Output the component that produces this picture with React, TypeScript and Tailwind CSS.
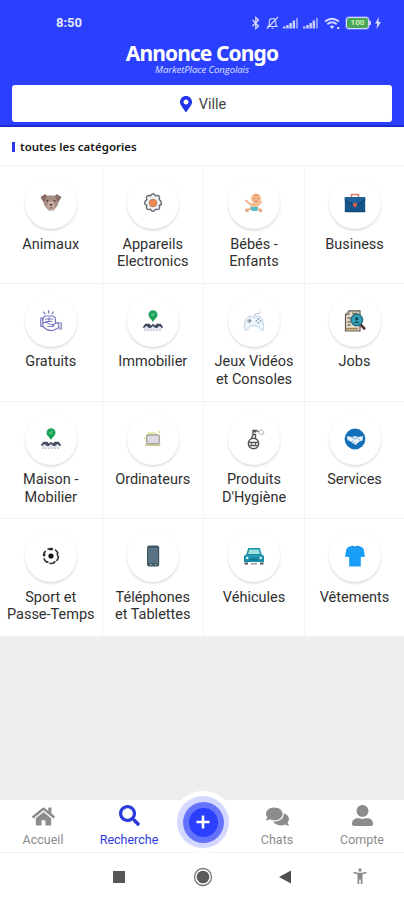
import React from 'react';
import { FaMapMarkerAlt, FaHome, FaSearch, FaComments, FaUserAlt } from 'react-icons/fa';

// ICONES DES CATEGORIES
const DogIcon = () => (
  <svg width="22" height="22" viewBox="0 0 22 22">
    <path d="M4 3.500h14l1.500 4-2 6-4 5h-5l-4-5-2-6z" fill="#a58d84" />
    <path d="M.5 5l5-3L7 4.500 4.500 9.500 2.500 8.500zM21.500 5l-5-3L15 4.500l2.500 5 2-1z" fill="#8a6d66" />
    <path d="M8.500 9h5l1.500 5-2 4H9l-2-4z" fill="#c9ada0" />
    <circle cx="7.500" cy="8.800" r="1.100" fill="#5c4743" />
    <circle cx="14.500" cy="8.800" r="1.100" fill="#5c4743" />
    <path d="M9.300 12h3.400L11 14.500z" fill="#4b3936" />
    <path d="M9.500 16h3" stroke="#6b504a" strokeWidth="1" />
  </svg>
);

const GearIcon = () => (
  <svg width="22" height="22" viewBox="0 0 22 22">
    <path
      d="M8.500 3.900Q9.500 1.700 11 1.700t2.500 2.200q2.300-.9 3.500.2 1.100 1.200.2 3.500 2.200.9 2.200 3.400t-2.200 2.500q.9 2.300-.2 3.500-1.200 1.100-3.500.2-1 2.200-2.500 2.200t-2.500-2.200q-2.300.9-3.500-.2-1.100-1.200-.2-3.500-2.200-1-2.200-2.500t2.200-3.400q-.9-2.300.2-3.500 1.200-1.100 3.500-.2z"
      fill="#eef1f5" stroke="#666b72" strokeWidth="1.400" strokeLinejoin="round"
    />
    <circle cx="11" cy="11" r="3.800" fill="#f08a54" stroke="#b5714f" strokeWidth=".8" />
  </svg>
);

const BabyIcon = () => (
  <svg width="22" height="22" viewBox="0 0 22 22">
    <path d="M3 8.500l5 4.500M18 10l-4 4M8 17l-5 .8M13 17l5 .8" stroke="#f1b48b" strokeWidth="2" strokeLinecap="round" />
    <path d="M8 11h7v6H8z" fill="#f5bd96" />
    <circle cx="13" cy="6.500" r="5" fill="#f5b88d" />
    <path d="M11.500 3.500q2-1.500 4 .5" stroke="#d98f65" fill="none" />
    <circle cx="11.500" cy="6.500" r=".6" fill="#9c5f43" />
    <circle cx="15" cy="6.500" r=".6" fill="#9c5f43" />
    <path d="M11.500 9q1.500 1 3 0" stroke="#c96d4e" fill="none" strokeWidth=".8" />
    <path d="M7 15h8l-1 4H9z" fill="#4bbcc8" />
    <path d="M2.500 19h3M16 19h3" stroke="#d38f70" strokeWidth="1.300" />
  </svg>
);

const BriefcaseIcon = () => (
  <svg width="22" height="22" viewBox="0 0 22 22">
    <path d="M7.500 6V2.500h7V6" fill="none" stroke="#d9806c" strokeWidth="1.500" strokeLinejoin="round" />
    <rect x=".8" y="5" width="20.400" height="15.300" rx="1" fill="#15558c" />
    <path d="M.8 5h20.400v3L11 13.500.8 8z" fill="#1f619b" />
    <path d="M.8 8 11 13.500 21.200 8M.8 19.300h20.400" fill="none" stroke="#113e69" strokeWidth="1" />
    <path d="M9 11h4v2.500L11 15.500l-2-2z" fill="#d8604d" />
  </svg>
);

const GiftHandIcon = () => (
  <svg width="22" height="22" viewBox="0 0 22 22" fill="none" stroke="#7978c0" strokeWidth="1.200" strokeLinejoin="round" strokeLinecap="round">
    <path d="M8.500.600v2.500M3.500 2l1.500 2M13.500 2 12 4" />
    <path d="M3 9.500q0-3.500 3.500-3.500h5q4 0 4 3.500V13" />
    <path d="M5.500 9h2.500M10 9h3M6 11.500h6M9 7.500v4M.8 8h2v8.500h-2z" />
    <path d="M3 13q4-1.500 6 1l4 .5q2 1.500-1 2H8M12 15l6-2.500 1 5-6 3q-6 .5-10-4" />
    <path d="M18 13h3.200v6h-2.200" />
  </svg>
);

const HousesIcon = () => (
  <svg width="22" height="22" viewBox="0 0 22 22">
    <path d="M11 .3A4.500 4.500 0 0 0 6.500 4.800C6.500 7.800 9.500 9 11 12c1.500-3 4.500-4.200 4.500-7.200A4.500 4.500 0 0 0 11 .3z" fill="#1ba35a" />
    <path d="m9.200 6.300 3.500-3.500M9.500 4.300l2.800 1.500" stroke="#7ad39c" strokeWidth=".9" />
    <path d="M2 17.500l3-2.500 3 2.500V20H2zM8 17.500l3-2.500 3 2.500V20H8zM14 17.500l3-2.500 3 2.500V20h-6z" fill="#e3e6ed" />
    <path d="m.7 17.300 2.600-3.500h4L9 15.500l2-1.800 2 1.800 1.700-1.700h4l2.600 3.500-1.300.6-2.500-2-2.500 2.200-1.700-.1-2.300-2-2.300 2-1.700.1-2.500-2.200-2.500 2z" fill="#454d62" />
    <path d="M2 20.300h18" stroke="#b8bfcd" strokeWidth="1" strokeDasharray="2 1" />
  </svg>
);

const GamepadIcon = () => (
  <svg width="22" height="22" viewBox="0 0 22 22">
    <path d="M12 6V4.500q0-1 2-1h1.500q1.500 0 1.500-2" fill="none" stroke="#b0b8c2" strokeWidth="1.100" strokeDasharray="2.500 .8" />
    <path d="M5 6.500q2-1 4 .5h4q2-1.500 4.500-.5 2 1 3 7.500.8 6-1.200 6.500-1.500.3-4.300-4.500H7q-2.800 4.800-4.300 4.500-2-.5-1.200-6.500 1-6.500 3.500-7.500z" fill="#edf5fc" stroke="#bfd3e5" strokeWidth="1" />
    <path d="M6.500 8.700v4.400M4.300 10.900h4.400" stroke="#8494a5" strokeWidth="1.400" />
    <circle cx="15.500" cy="8.900" r=".9" fill="#839bbd" />
    <circle cx="15.500" cy="12.900" r=".9" fill="#97a5b5" />
    <circle cx="13.500" cy="10.900" r=".9" fill="#90a5bb" />
    <circle cx="17.500" cy="10.900" r=".9" fill="#90a5bb" />
  </svg>
);

const JobsIcon = () => (
  <svg width="22" height="22" viewBox="0 0 22 22">
    <path d="M5 .8h11v20.200H1.500V4.500z" fill="#e3dccd" stroke="#615a53" strokeWidth="1.200" />
    <path d="M1.500 4.500H5V.8" fill="#c9bca9" stroke="#59534d" strokeWidth=".8" />
    <path d="M3.500 8h3M3.500 12h3M3.500 15h3M8 3.500h6" stroke="#7d6f58" strokeWidth="1.600" />
    <path d="M2 18.700h12" stroke="#a58754" strokeWidth="1.800" />
    <path d="m16.500 14.500 3.800 4" stroke="#56372e" strokeWidth="2.600" strokeLinecap="round" />
    <circle cx="12.800" cy="10" r="5.700" fill="#35a2b9" stroke="#2a6f86" strokeWidth="1.600" />
    <circle cx="12.800" cy="8.700" r="1.700" fill="#164b5e" />
    <path d="M9.800 13q3-3.500 6 0" fill="#164b5e" />
  </svg>
);

const ComputerIcon = () => (
  <svg width="22" height="22" viewBox="0 0 22 22">
    <circle cx="10.500" cy="11" r="7" fill="#e2e8a6" />
    <rect x="4.700" y="7" width="12.600" height="8.800" rx="1.500" fill="#dcdae3" stroke="#aaa59c" strokeWidth="1.400" />
    <path d="M3.500 17h14.500" stroke="#bdbd84" strokeWidth="1.300" strokeLinecap="round" />
    <path d="M17.500 3v2M16.500 4h2M2.500 9v2M6 4.500h1" stroke="#d6df78" strokeWidth="1" />
  </svg>
);

const PerfumeIcon = () => (
  <svg width="22" height="22" viewBox="0 0 22 22" fill="none" stroke="#555" strokeWidth="1.400">
    <circle cx="10.500" cy="15.500" r="5.200" />
    <path d="M8.500 10.500 10 6.500h2.500v4M10 6V2.500h3.500L15.500 4M6 14.500h9M6.500 17.500h8M10 3l3 1" />
    <path d="M8.500 14.500v3M12.500 14.500v3" strokeWidth=".8" />
    <path d="m15.500 4.300 1-2 1.700-.5 1.500.7 1.300 1.500-.7 2-2 .8-1.800-.7z" stroke="#888" strokeWidth=".9" strokeDasharray="1.800 .8" />
  </svg>
);

const HandshakeIcon = () => (
  <svg width="22" height="22" viewBox="0 0 22 22">
    <circle cx="11" cy="11" r="10.400" fill="#136fb8" />
    <path d="m3 8 4.500 1L11 8l3.500 1L19 8l-.5 4.500-3 1-4 3.500-4.800-3.500L3.500 12z" fill="#e9f2fa" />
    <path d="m7.500 9 3.500 2 2-1.500 3 3M8 14l1.500-1.500M10 15.500l1.500-1.500" fill="none" stroke="#6ca4d2" strokeWidth=".9" />
  </svg>
);

const BallIcon = () => (
  <svg width="22" height="22" viewBox="0 0 22 22">
    <circle cx="11" cy="11" r="7.500" fill="none" stroke="#333" strokeWidth="1.600" strokeDasharray="5.500 2.350" />
    <circle cx="11" cy="11" r="2.600" fill="#111" />
    <path d="M9 4.600h4M4.800 8.500l-.5 3M17.200 8.500l.5 3M6.500 16.300l2 1M15.500 16.300l-2 1" fill="none" stroke="#222" strokeWidth="1.500" />
  </svg>
);

const PhoneIcon = () => (
  <svg width="22" height="22" viewBox="0 0 22 22">
    <rect x="5" y=".5" width="12.200" height="21" rx="2" fill="#455a68" />
    <path d="M6.300 3h9.600v15H6.300z" fill="#5a7384" />
    <path d="M8 19.500h1.500M13 19.500h1.500" stroke="#a9b9c3" strokeWidth="1.200" />
  </svg>
);

const CarIcon = () => (
  <svg width="22" height="22" viewBox="0 0 22 22">
    <path d="M1.500 17.500h3.500v2H1.500zM17 17.500h3.500v2H17z" fill="#4c565b" />
    <path d="m1 11 2.500-2L5.200 3h11.600l1.700 6 2.500 2v6H1z" fill="#188ba6" />
    <path d="M6.300 4.500h9.400L17 9H5z" fill="#9be0dc" />
    <path d="M1 11h20" stroke="#36a9bf" strokeWidth="1" />
    <circle cx="4.200" cy="13" r="1.300" fill="#d8f4f5" />
    <circle cx="17.800" cy="13" r="1.300" fill="#d8f4f5" />
    <path d="M7 14.800h8" stroke="#137087" strokeWidth="1.200" />
    <path d="M8 18.800h6" stroke="#7b8589" strokeWidth="1.200" />
  </svg>
);

const ShirtIcon = () => (
  <svg width="22" height="22" viewBox="0 0 22 22">
    <path d="M7 1h2q2 1.500 4 0h2q3.800.8 4.600 3l1.400 7.500-4.200.8v9.200H5.200v-9.200L1 11.500 2.400 4Q3.200 1.800 7 1z" fill="#1a9ef5" />
    <path d="M7.800 1q3.200 3 6.400 0" stroke="#0f78c4" strokeWidth="1" fill="none" />
  </svg>
);

const categories = [
  { label: ['Animaux'], icon: DogIcon },
  { label: ['Appareils', 'Electronics'], icon: GearIcon },
  { label: ['Bébés -', 'Enfants'], icon: BabyIcon },
  { label: ['Business'], icon: BriefcaseIcon },
  { label: ['Gratuits'], icon: GiftHandIcon },
  { label: ['Immobilier'], icon: HousesIcon },
  { label: ['Jeux Vidéos', 'et Consoles'], icon: GamepadIcon },
  { label: ['Jobs'], icon: JobsIcon },
  { label: ['Maison -', 'Mobilier'], icon: HousesIcon },
  { label: ['Ordinateurs'], icon: ComputerIcon },
  { label: ['Produits', "D'Hygiène"], icon: PerfumeIcon },
  { label: ['Services'], icon: HandshakeIcon },
  { label: ['Sport et', 'Passe-Temps'], icon: BallIcon },
  { label: ['Téléphones', 'et Tablettes'], icon: PhoneIcon },
  { label: ['Véhicules'], icon: CarIcon },
  { label: ['Vêtements'], icon: ShirtIcon },
];

const SignalIcon = () => (
  <svg width="16" height="12" viewBox="0 0 16 12" fill="#c9d0ff">
    <path d="M0 9.500h2.500v2H0zM3.200 8h2.500v3.500H3.200zM6.400 6h2.500v5.500H6.400zM9.600 3.500h2.500v8H9.600z" />
    <path d="M13 1h2v10.500h-2z" opacity=".6" />
  </svg>
);

const StatusBar = () => (
  <div className="flex h-[46px] items-center justify-between pr-[23px] pl-[56px]">
    <span className="text-[13px] font-bold text-[#e3e7ff]">8:50</span>
    <div className="flex items-center text-[#d5daff]">
      <svg width="10" height="14" viewBox="0 0 10 14" fill="none" stroke="currentColor" strokeWidth="1.300">
        <path d="m1.500 4 6 6L4.800 12.500v-11L7.500 4l-6 6" />
      </svg>
      <svg className="ml-[5px]" width="13" height="14" viewBox="0 0 13 14" fill="none" stroke="currentColor" strokeWidth="1.100">
        <path d="M2 10.500h9L9.800 9V5.500Q9.500 2.500 6.500 2.500T3.200 5.500V9zM5.500 12.200h2M12 1 1 12.500" />
      </svg>
      <div className="ml-[4px] flex gap-[4px]">
        <SignalIcon />
        <SignalIcon />
      </div>
      <svg className="ml-[5px]" width="17" height="13" viewBox="0 0 17 13" fill="none" stroke="currentColor" strokeWidth="1.900">
        <path d="M1 4.500q7-5.500 14 0M3.300 7.200q4.700-3.700 9.400 0" />
        <path d="M5.700 9.300 8 12l2.300-2.700Q8 7.800 5.700 9.300z" fill="currentColor" stroke="none" />
        <path d="M13 11h2.500" />
      </svg>
      <div className="ml-[5px] flex h-[12px] w-[23px] items-center justify-center rounded-[3px] border border-[#d5daff] bg-[#48a65c] text-[8px] leading-none font-bold text-[#d7f3b5] ring-1 ring-[#d5daff]/30">
        100
      </div>
      <div className="h-[4px] w-[2px] bg-[#c9d0ff]" />
      <svg className="ml-[4px]" width="6" height="12" viewBox="0 0 6 12" fill="currentColor">
        <path d="M4 0 0 6.500h2.200L1.500 12 6 5H3.500z" />
      </svg>
    </div>
  </div>
);

const App = () => {
  return (
    <div className="flex h-[900px] w-[404px] flex-col overflow-hidden bg-[#eeeeee] font-['Roboto',sans-serif]">
      {/* HEADER */}
      <header className="h-[127px] shrink-0 border-b-[2px] border-[#1c2bc9] bg-[#2b3ffe] text-white">
        <StatusBar />
        <div className="flex h-[39px] flex-col items-center">
          <h1 className="-mt-[4px] font-['Noto_Sans'] text-[21px] leading-[23px] font-bold tracking-[-0.9px] whitespace-nowrap">Annonce Congo</h1>
          <p className="font-['Open_Sans'] text-[9.500px] leading-[10px] tracking-[-0.06px] text-[#dfe3ff] italic whitespace-nowrap">MarketPlace Congolais</p>
        </div>
        <div className="mx-[12px] flex h-[37px] items-center justify-center gap-[5px] rounded-[3px] bg-white">
          <FaMapMarkerAlt size={16} color="#1f32e6" />
          <span className="pt-[2px] text-[14.500px] text-[#444]">Ville</span>
        </div>
      </header>

      <div className="flex h-[39px] shrink-0 items-center gap-[5px] border-b border-[#f3f3f3] bg-white pt-[1px] pl-[12px]">
        <div className="h-[10px] w-[3px] bg-[#2636e8]" />
        <h2 className="font-['Noto_Sans'] text-[11.500px] font-semibold text-[#171717]">toutes les catégories</h2>
      </div>

      {/* CATEGORIES */}
      <div className="grid h-[471px] shrink-0 grid-cols-[102.5px_101.5px_101px_99px] grid-rows-4 bg-white">
        {categories.map((cat) => (
          <div key={cat.label[0]} className="flex flex-col items-center border-r border-b border-[#f3f3f3] pt-[11px] nth-[4n]:border-r-0">
            <div className="flex h-[52px] w-[52px] shrink-0 items-center justify-center rounded-full bg-white shadow-[0_1.5px_2.5px_rgba(0,0,0,0.15)]">
              <cat.icon />
            </div>
            <div className="mt-[6.500px] text-center text-[14.500px] leading-[17.500px] whitespace-nowrap text-[#303030]">
              {cat.label.map((line) => (
                <div key={line}>{line}</div>
              ))}
            </div>
          </div>
        ))}
      </div>

      {/* NAVIGATION */}
      <nav className="relative mt-auto flex h-[53px] shrink-0 border-b border-[#f3f3f3] bg-white text-[12.500px] text-[#8c8c8c]">
        <div className="flex w-[86px] flex-col items-center pt-[5px]">
          <FaHome size={23} />
          <span className="mt-[4px] leading-[16px]">Accueil</span>
        </div>
        <div className="flex w-[86px] flex-col items-center pt-[5px] text-[#2c3bdc]">
          <FaSearch size={21} />
          <span className="mt-[6px] leading-[16px]">Recherche</span>
        </div>
        <div className="w-[62px]" />
        <div className="flex w-[86px] flex-col items-center pt-[5px]">
          <FaComments size={23} />
          <span className="mt-[4px] leading-[16px]">Chats</span>
        </div>
        <div className="flex w-[84px] flex-col items-center pt-[5px]">
          <FaUserAlt size={21} />
          <span className="mt-[6px] leading-[16px]">Compte</span>
        </div>
        <div className="absolute top-[-9px] left-[172px] flex h-[62px] w-[62px] items-center justify-center rounded-full bg-white">
          <div className="flex h-[52px] w-[52px] items-center justify-center rounded-full bg-[#d4d8ff]">
            <div className="flex h-[41px] w-[41px] items-center justify-center rounded-full bg-[#6573fb]">
              <div className="flex h-[29px] w-[29px] items-center justify-center rounded-full bg-[#2b3ffe]">
                <svg width="14" height="14" viewBox="0 0 14 14" stroke="white" strokeWidth="2.600">
                  <path d="M7 .5v13M.5 7h13" />
                </svg>
              </div>
            </div>
          </div>
        </div>
      </nav>

      {/* SYSTEM BAR */}
      <div className="flex h-[47px] shrink-0 items-center bg-white pl-[113px]">
        <div className="h-[12px] w-[12px] bg-[#565656]" />
        <svg className="ml-[68px]" width="20" height="20" viewBox="0 0 20 20">
          <circle cx="10" cy="10" r="8.500" fill="none" stroke="#777" strokeWidth="1.300" />
          <circle cx="10" cy="10" r="6.300" fill="#5a5a5a" />
        </svg>
        <svg className="ml-[66px]" width="12" height="14" viewBox="0 0 12 14">
          <path d="M12 .5v13L0 7z" fill="#505050" />
        </svg>
        <svg className="ml-[62px]" width="14" height="17" viewBox="0 0 14 17" fill="#888">
          <circle cx="7" cy="2" r="1.700" />
          <path d="M.5 3.800 5 4.800h4l4.500-1v1.400L9.500 6.300V16H7.800v-4.500H6.200V16H4.500V6.300L.5 5.200z" />
        </svg>
      </div>
    </div>
  );
};

export default App;
